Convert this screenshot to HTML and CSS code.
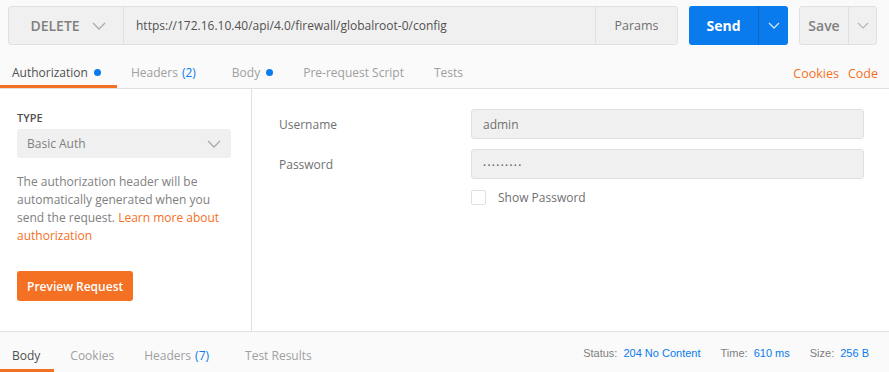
FILE: index.html
```html
<!DOCTYPE html>
<html lang="en">
<head>
  <meta charset="UTF-8">
  <title>Request</title>
  <link rel="stylesheet" href="styles.css">
</head>
<body>
  <div class="url-bar">
    <div class="url-group">
      <div class="method">DELETE
        <svg class="chev" width="14" height="8" viewBox="0 0 14 8"><path d="M1 1l6 6 6-6" fill="none" stroke="#aaa" stroke-width="1.3"/></svg>
      </div>
      <div class="url">https://172.16.10.40/api/4.0/firewall/globalroot-0/config</div>
      <div class="params">Params</div>
    </div>
    <div class="send">
      <span class="send-label">Send</span>
      <span class="send-drop"><svg width="12" height="7" viewBox="0 0 12 7"><path d="M1 1l5 5 5-5" fill="none" stroke="#cfe3fb" stroke-width="1.3"/></svg></span>
    </div>
    <div class="save">
      <span class="save-label">Save</span>
      <span class="save-drop"><svg width="12" height="7" viewBox="0 0 12 7"><path d="M1 1l5 5 5-5" fill="none" stroke="#b5b5b5" stroke-width="1.2"/></svg></span>
    </div>
  </div>

  <div class="tabs">
    <span class="tab active">Authorization <i class="dot"></i></span>
    <span class="tab wide">Headers <b class="count">(2)</b></span>
    <span class="tab">Body <i class="dot"></i></span>
    <span class="tab">Pre-request Script</span>
    <span class="tab">Tests</span>
    <span class="tab-links"><a>Cookies</a><a>Code</a></span>
  </div>

  <div class="auth">
    <div class="auth-side">
      <div class="type-label">TYPE</div>
      <div class="type-select">Basic Auth
        <svg width="14" height="8" viewBox="0 0 14 8"><path d="M1 1l6 6 6-6" fill="none" stroke="#aaa" stroke-width="1.3"/></svg>
      </div>
      <p class="help">The authorization header will be automatically generated when you send the request. <a>Learn more about authorization</a></p>
      <button class="preview">Preview Request</button>
    </div>
    <div class="auth-form">
      <div class="row">
        <label>Username</label>
        <div class="field">admin</div>
      </div>
      <div class="row">
        <label>Password</label>
        <div class="field pw">&bull;&bull;&bull;&bull;&bull;&bull;&bull;&bull;&bull;</div>
      </div>
      <div class="row check-row">
        <label></label>
        <div class="check"><span class="box"></span>Show Password</div>
      </div>
    </div>
  </div>

  <div class="response">
    <span class="tab active">Body</span>
    <span class="tab">Cookies</span>
    <span class="tab wide">Headers <b class="count">(7)</b></span>
    <span class="tab">Test Results</span>
    <div class="meta">
      <span>Status: <em>204 No Content</em></span>
      <span>Time: <em>610 ms</em></span>
      <span>Size: <em>256 B</em></span>
    </div>
  </div>
</body>
</html>
```

FILE: styles.css
```css
body {
  margin: 0;
  font-family: 'Open Sans', sans-serif;
  font-size: 12px;
  color: #505050;
  background: #fafafa;
  width: 889px;
  height: 372px;
  overflow: hidden;
}
.url-bar {
  display: flex;
  padding: 6px 12px 0 8px;
  height: 39px;
}
.url-group {
  display: flex;
  width: 670px;
  border: 1px solid #e0e0e0;
  border-radius: 3px;
  background: #f0f0f0;
  box-sizing: border-box;
}
.method {
  width: 115px;
  display: flex;
  align-items: center;
  justify-content: center;
  gap: 12px;
  font-size: 14px;
  font-weight: 600;
  color: #808080;
  border-right: 1px solid #e0e0e0;
  box-sizing: border-box;
  padding-left: 4px;
}
.url {
  flex: 1;
  display: flex;
  align-items: center;
  padding-left: 12px;
  color: #505050;
}
.params {
  width: 81px;
  display: flex;
  align-items: center;
  justify-content: center;
  border-left: 1px solid #e0e0e0;
  color: #707070;
  font-size: 12.5px;
}
.send {
  margin-left: 11px;
  width: 99px;
  display: flex;
  background: #097bed;
  border-radius: 3px;
  color: #fff;
}
.send-label {
  width: 69px;
  display: flex;
  align-items: center;
  justify-content: center;
  font-size: 14px;
  font-weight: 700;
  border-right: 1px solid #0a68c8;
}
.send-drop, .save-drop {
  flex: 1;
  display: flex;
  align-items: center;
  justify-content: center;
}
.save {
  margin-left: 11px;
  width: 78px;
  display: flex;
  background: #f0f0f0;
  border: 1px solid #e0e0e0;
  border-radius: 3px;
  box-sizing: border-box;
}
.save-label {
  width: 48px;
  display: flex;
  align-items: center;
  justify-content: center;
  font-size: 14px;
  font-weight: 600;
  color: #808080;
  border-right: 1px solid #e0e0e0;
}
.tabs {
  display: flex;
  align-items: center;
  height: 33px;
  margin-top: 10px;
  border-bottom: 1px solid #e0e0e0;
  padding-left: 12px;
  padding-right: 11px;
}
.tab {
  position: relative;
  color: #a0a0a0;
  margin-right: 30px;
  height: 100%;
  display: flex;
  align-items: center;
  padding-top: 1px;
  box-sizing: border-box;
}
.tabs .tab.wide,
.response .tab.wide {
  margin-right: 36px;
}
.tab.active {
  color: #505050;
}
.tabs .tab.active::after,
.response .tab.active::after {
  content: "";
  position: absolute;
  left: -12px;
  right: -16px;
  bottom: 0;
  height: 3px;
  background: #f47023;
}
.dot {
  display: inline-block;
  width: 7px;
  height: 7px;
  border-radius: 50%;
  background: #097bed;
  margin-left: 6px;
}
.count {
  font-weight: 400;
  color: #097bed;
  margin-left: 4px;
}
.tab-links {
  margin-left: auto;
  display: flex;
  gap: 9px;
  color: #f47023;
  padding-top: 3px;
  font-size: 12.5px;
}
.auth {
  display: flex;
  height: 242px;
  background: #fff;
  border-bottom: 1px solid #e0e0e0;
}
.auth-side {
  width: 252px;
  border-right: 1px solid #e0e0e0;
  padding: 21px 20px 0 17px;
  box-sizing: border-box;
}
.type-label {
  font-size: 11px;
  font-weight: 600;
  color: #505050;
  margin-bottom: 4px;
}
.type-select {
  height: 29px;
  background: #f0f0f0;
  border-radius: 3px;
  display: flex;
  align-items: center;
  justify-content: space-between;
  padding: 0 10px;
  color: #808080;
}
.help {
  margin: 15px 0 0;
  line-height: 18px;
  color: #808080;
}
.help a {
  color: #f47023;
}
.preview {
  margin-top: 26px;
  height: 30px;
  padding: 0 10px;
  border: none;
  border-radius: 3px;
  background: #f47023;
  color: #fff;
  font-family: 'Open Sans', sans-serif;
  font-size: 12px;
  font-weight: 600;
}
.auth-form {
  flex: 1;
  padding: 20px 25px 0 27px;
}
.row {
  display: flex;
  align-items: center;
  margin-bottom: 10px;
}
.row label {
  width: 192px;
  color: #707070;
}
.field {
  flex: 1;
  height: 30px;
  box-sizing: border-box;
  background: #f0f0f0;
  border: 1px solid #e0e0e0;
  border-radius: 3px;
  display: flex;
  align-items: center;
  padding-left: 11px;
  color: #707070;
}
.pw {
  font-size: 8px;
  letter-spacing: 1.4px;
}
.check {
  display: flex;
  align-items: center;
  color: #707070;
  margin-top: 0;
}
.box {
  width: 13px;
  height: 13px;
  border: 1px solid #e0e0e0;
  border-radius: 2px;
  margin-right: 12px;
  background: #fff;
}
.response {
  display: flex;
  align-items: center;
  height: 40px;
  padding-left: 12px;
  padding-right: 20px;
}
.response .tab {
  margin-right: 30px;
  padding-top: 6px;
}
.response .tab.active::after {
  right: -14px;
}
.meta {
  margin-left: auto;
  display: flex;
  gap: 20px;
  font-family: 'Liberation Sans', Arial, sans-serif;
  font-size: 11px;
  color: #808080;
  padding-top: 2px;
}
.meta em {
  font-style: normal;
  color: #097bed;
  margin-left: 3px;
}
```
